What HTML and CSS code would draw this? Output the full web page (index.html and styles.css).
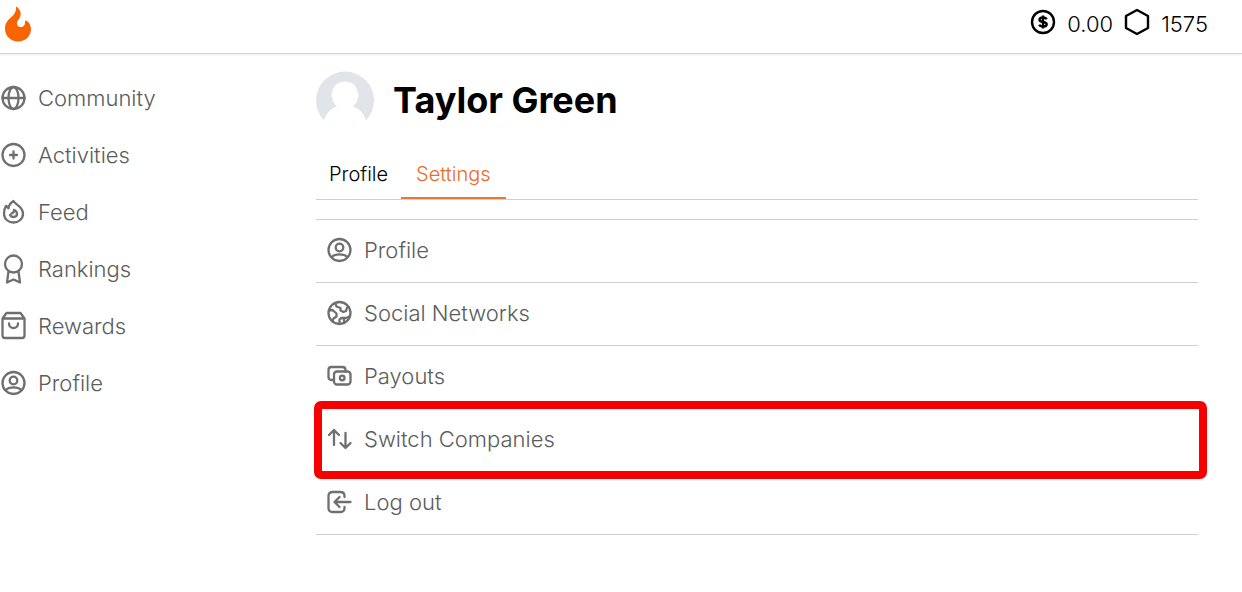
FILE: index.html
```html
<!DOCTYPE html>
<html lang="en">
<head>
<meta charset="utf-8">
<meta name="viewport" content="width=device-width, initial-scale=1">
<title>Settings</title>
<link rel="stylesheet" href="styles.css">
</head>
<body>
<svg class="symbols" aria-hidden="true">
  <symbol id="user" viewBox="0 0 27 32">
    <circle cx="13.5" cy="16" r="11"/><circle cx="13.5" cy="13.5" r="3.800"/>
    <path d="M5.500 23c2-1.800 4.500-2.600 8-2.600s6 .8 8 2.600"/>
  </symbol>
</svg>
<header class="topbar">
  <a class="logo" href="#" aria-label="Home">
    <svg viewBox="0 0 28 36" width="28" height="36"><path d="M13 1c3 2.500 4.500 6 3.200 9.500-1 2.800-3.500 4.500-3.300 7.300.2 2.100 1.800 3.200 3.700 3.200 3 0 4.700-2 4.400-5.600 0-.9.800-1.200 1.600-.7 2.800 1.700 4.400 5.100 4.400 8.300 0 7-5.700 12.500-13 12.500S1 30 1 22.500c0-5 2.600-8.200 5.600-10.700C10.500 8.600 12.200 5.500 12 1.700c0-.8.400-1.100 1-.7z"/></svg>
  </a>
  <div class="balances">
    <svg class="coin" viewBox="0 0 26 32" width="26" height="32"><circle cx="13" cy="14" r="11"/><path d="M16.600 11.400c-.6-1.400-1.900-1.900-3.600-1.900-2.100 0-3.500.9-3.500 2.300 0 3.200 7.200 1.200 7.200 4.500 0 1.500-1.500 2.300-3.700 2.300-1.900 0-3.200-.7-3.700-2M13 7.500v13"/></svg>
    <span>0.00</span>
    <svg class="hex" viewBox="0 0 26 32" width="26" height="32"><path d="M13 2l11 6v12l-11 6-11-6V8z"/></svg>
    <span>1575</span>
  </div>
</header>
<div class="layout">
  <nav class="sidebar">
    <a href="#"><svg class="icon" viewBox="0 0 27 32"><circle cx="13.5" cy="16" r="11"/><ellipse cx="13.5" cy="16" rx="5" ry="11"/><path d="M2.500 16h22"/></svg>Community</a>
    <a href="#"><svg class="icon" viewBox="0 0 27 32"><circle cx="13.5" cy="16" r="11"/><path d="M10 16h7M13.500 12.500v7"/></svg>Activities</a>
    <a href="#"><svg class="icon" viewBox="0 0 27 32"><path d="M13.500 5c.8 3.200 9.500 5 9.500 12.500 0 5.300-4.200 9-9.500 9S4 22.800 4 17.500c0-3 .6-5.400 2-7.700 1 .3 1.800 1.200 2.300 2.600C9 9.300 10.600 6.700 13.500 5z"/><path d="M14 14c0 2-.8 3.200-2.500 3.500M14 14c2 .8 3 2 3 3.800 0 2-1.400 3.200-3.500 3.200-1.700 0-2.900-.6-3.500-1.900"/></svg>Feed</a>
    <a href="#"><svg class="icon" viewBox="0 0 27 32"><circle cx="13.5" cy="11" r="8.500"/><path d="M8.500 18.500L7 29.500l6.500-3 6.500 3-1.500-11"/></svg>Rankings</a>
    <a href="#"><svg class="icon" viewBox="0 0 27 32"><path d="M2.500 8.500v17q0 2.500 2.500 2.500h17q2.500 0 2.500-2.500v-17l-4-5.500h-14zM2.500 8.500h22M9 13.500c0 6 9 6 9 0"/></svg>Rewards</a>
    <a href="#"><svg class="icon"><use href="#user"/></svg>Profile</a>
  </nav>
  <main class="content">
    <div class="person">
      <svg class="avatar" viewBox="0 0 58 58" width="58" height="58" role="img" aria-label="Avatar"><path d="M8 49.500A29 29 0 1 1 50 49.500C48 43 44 38 37 35.500c3-2.500 4.300-5 4.300-8 1.600-1 1.800-4.500.5-5.500C41 14.500 36 10.500 29 10.500S17 14.500 16.200 22c-1.300 1-1.100 4.500.5 5.500 0 3 1.300 5.500 4.300 8C14 38 10 43 8 49.500z"/></svg>
      <h1>Taylor Green</h1>
    </div>
    <nav class="tabs"><a href="#">Profile</a><a class="active" href="#" aria-current="page">Settings</a></nav>
    <ul class="settings">
      <li><a href="#"><svg class="icon"><use href="#user"/></svg>Profile</a></li>
      <li><a href="#"><svg class="icon" viewBox="0 0 27 32"><circle cx="13.5" cy="16" r="11"/><path d="M9.500 6.500l1 3 4 1.500v2.500l3 1.500 2.500-1 1-3.500 1.500-.5M3 13.500l3.500-.5 4 3.500v3l-3 2-1 3M13.500 27v-4.500l2-1.500h4.500l3.500-1.500M18 26v-5"/></svg>Social Networks</a></li>
      <li><a href="#"><svg class="icon" viewBox="0 0 27 32"><rect x="8" y="11.500" width="16.500" height="13" rx="3"/><path d="M8 20H5.500q-3 0-3-3V10q0-3 3-3h11q3 0 3 3v1.500"/><circle cx="16.2" cy="18" r="2.300"/></svg>Payouts</a></li>
      <li class="highlight"><a href="#"><svg class="icon" viewBox="0 0 27 32"><path d="M8 22V7M3 12l5-5 5 5M19.500 10v15M14.500 20l5 5 5-5"/></svg>Switch Companies</a></li>
      <li><a href="#"><svg class="icon" viewBox="0 0 27 32"><path d="M18.500 11v-1q0-4-4-4h-8q-4 0-4 4v12q0 4 4 4h8q4 0 4-4v-1M24.500 16H9M13.500 11l-5 5 5 5"/></svg>Log out</a></li>
    </ul>
  </main>
</div>
</body>
</html>
```
FILE: styles.css
```css
* { box-sizing: border-box; }
body { margin: 0; background: #fff; color: #000; font-family: Inter, "Liberation Sans", sans-serif; font-size: 22px; font-weight: 300; line-height: 32px; }
a { color: inherit; text-decoration: none; }
.symbols { display: block; width: 0; height: 0; position: absolute; }
.topbar { display: flex; justify-content: space-between; align-items: center; height: 54px; padding: 0 34px 6px 4px; border-bottom: 1px solid #d3d3d3; box-shadow: 0 1px 2px #eee; }
.logo { display: flex; fill: #f96400; }
.balances { display: flex; align-items: center; gap: 11px; }
.balances svg { fill: none; stroke: #000; stroke-width: 2.4; stroke-linejoin: round; }
.layout { display: grid; grid-template-columns: 316px minmax(0, 1fr); }
.sidebar { display: flex; flex-direction: column; gap: 25px; padding-top: 28px; color: #5c5c5c; }
.sidebar a, .settings a { display: flex; align-items: center; gap: 11px; }
.icon { width: 27px; height: 32px; flex: none; fill: none; stroke: #6f6f6f; stroke-width: 2.3; stroke-linecap: round; stroke-linejoin: round; }
.content { padding: 17px 44px 0 0; }
.person { display: flex; align-items: center; gap: 19px; }
.avatar { fill: #e1e4e9; }
h1 { margin: 0; font-size: 36px; font-weight: 700; line-height: 48px; color: #000; }
.tabs { display: flex; margin-top: 18px; border-bottom: 1px solid #d0d0d0; font-size: 20px; line-height: 28px; }
.tabs a { padding: 13px 13px 11px; }
.tabs .active { color: #ed6a28; border-bottom: 2px solid #e07b39; padding: 13px 15px 9px; }
.settings { list-style: none; margin: 19px 0 0; padding: 0; border-top: 1px solid #d0d0d0; color: #5c5c5c; }
.settings li { position: relative; border-bottom: 1px solid #d0d0d0; }
.settings a { padding: 14px 10px 16px; }
.highlight::after { content: ""; position: absolute; inset: -8px -9px -8px -2px; border: 8px solid #f60000; border-radius: 7px; pointer-events: none; }
```
